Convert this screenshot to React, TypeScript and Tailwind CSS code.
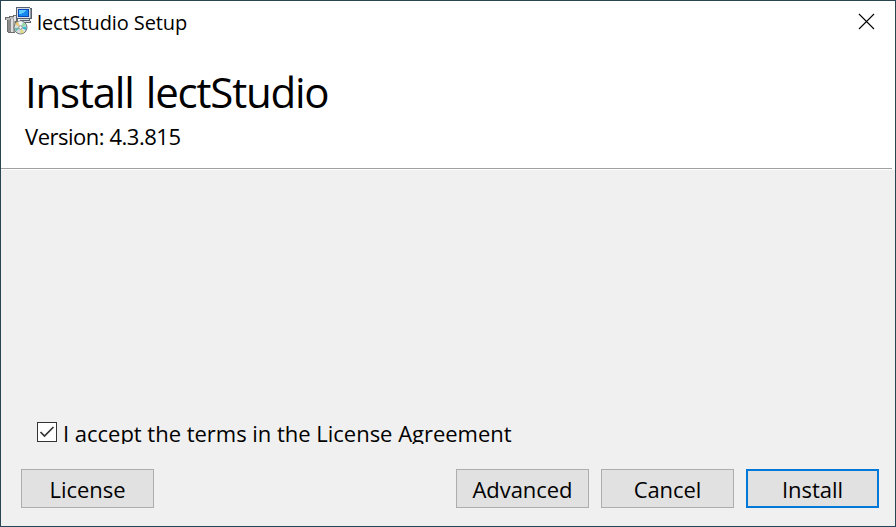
import type { ReactNode } from "react";

function InstallerIcon() {
  return (
    <svg width="28" height="28" viewBox="0 0 28 28" shapeRendering="crispEdges">
      <path d="M0 10h4V9h4V8h5v17h-3v1H3v-1H2V13H0z" fill="#6e6e6e" />
      <path d="M1 11h4v-1h4v2H5v1H1z" fill="#b9b9b9" />
      <path d="M3 13h3v12H3z" fill="#8c8c8c" />
      <path d="M6 12h2v13H6z" fill="#dedede" />
      <path d="M8 12h2v13H8z" fill="#a4a4a4" />
      <path d="M9 9h2v5H9z" fill="#e4e4e4" />
      <path d="M11 0h14v1h2v11h-2v2h1v2H13v-2h2v-2h-4z" fill="#56616d" />
      <path d="M12 1h13v10H12z" fill="#d5dce2" />
      <path d="M25 2h1v9h-1z" fill="#8e99a3" />
      <path d="M13 2h11v8H13z" fill="#0846b8" />
      <path d="M14 3h9v6h-9z" fill="#1687ee" />
      <path d="M14 3h7v1h-1v1h-1v1h-2v1h-3z" fill="#5ccaff" />
      <path d="M15 12h9v1h-9zM14 14h11v1H14z" fill="#d7dbdf" />
      <g shapeRendering="auto">
        <circle cx="15.5" cy="20.5" r="6.5" fill="#d8dddd" stroke="#707878" strokeWidth="1" />
        <path d="M15.5 20.5L10 17l2.5-2.5z" fill="#efc873" />
        <path d="M15.5 20.5l-2-6 4-.2z" fill="#f6f8f8" />
        <path d="M15.5 20.5l3-5.3 2.5 3z" fill="#8cdca8" />
        <path d="M15.5 20.5l6-1-.5 3.5z" fill="#37b9cf" />
        <path d="M15.5 20.5l3.5 5-3.5 1z" fill="#e7d978" />
        <path d="M15.5 20.5l-4.5 4-1.3-3.5z" fill="#6dbcaf" />
        <circle cx="15.5" cy="20.5" r="1.7" fill="#fff" stroke="#8a8f8f" />
      </g>
    </svg>
  );
}

function Button({ children, primary = false }: { children: ReactNode; primary?: boolean }) {
  return (
    <button
      className={`flex h-[39px] w-[133px] items-center justify-center bg-[#e1e1e1] pt-px text-[22px] leading-none tracking-[-0.05px] ${
        primary ? "border-2 border-[#0078d7]" : "border border-[#adadad]"
      }`}
    >
      {children}
    </button>
  );
}

export default function App() {
  return (
    <main className="flex h-[527px] w-[896px] flex-col overflow-hidden border border-[#2a4552] bg-[#f0f0f0] font-['Open_Sans',sans-serif] text-black">
      <header className="h-[169px] bg-white">
        <div className="flex h-[44px] items-start pl-1 pt-[6px]">
          <InstallerIcon />
          <span className="ml-[4px] mt-[2px] whitespace-nowrap text-[20px] leading-[28px] tracking-[-0.1px]">lectStudio Setup</span>
          <svg className="ml-auto mr-[20px] mt-[6px]" width="17" height="17" viewBox="0 0 17 17">
            <path d="M1 1L16 16M16 1L1 16" stroke="#000" strokeWidth="1.1" />
          </svg>
        </div>
        <h1 className="h-[76px] pl-[24px] pt-[19px] text-[42px] leading-[56px] tracking-[-1.2px] [word-spacing:2.5px]">Install lectStudio</h1>
        <p className="h-[47px] pl-[24px] text-[22px] leading-[30px] tracking-[-0.48px]">Version: 4.3.815</p>
        <div className="mr-[3px] h-px bg-[#a0a0a0]" />
        <div className="h-px bg-white" />
      </header>
      <section className="flex flex-1 flex-col justify-end">
        <label className="mb-[25px] ml-[36px] flex h-[23px] items-start overflow-hidden">
          <svg className="mt-px" width="20" height="20" viewBox="0 0 20 20">
            <rect x=".5" y=".5" width="19" height="19" fill="#fff" stroke="#333" />
            <path d="M3.5 10l4 4L16.5 5" fill="none" stroke="#333" strokeWidth="1.7" />
          </svg>
          <span className="ml-[6px] -mt-[3px] whitespace-nowrap text-[22px] leading-[30px] tracking-[-0.02px]">I accept the terms in the License Agreement</span>
        </label>
        <div className="mb-[18px] ml-[20px] mr-[16px] flex">
          <Button>License</Button>
          <div className="ml-auto flex gap-[12px]">
            <Button>Advanced</Button>
            <Button>Cancel</Button>
            <Button primary>Install</Button>
          </div>
        </div>
      </section>
    </main>
  );
}
